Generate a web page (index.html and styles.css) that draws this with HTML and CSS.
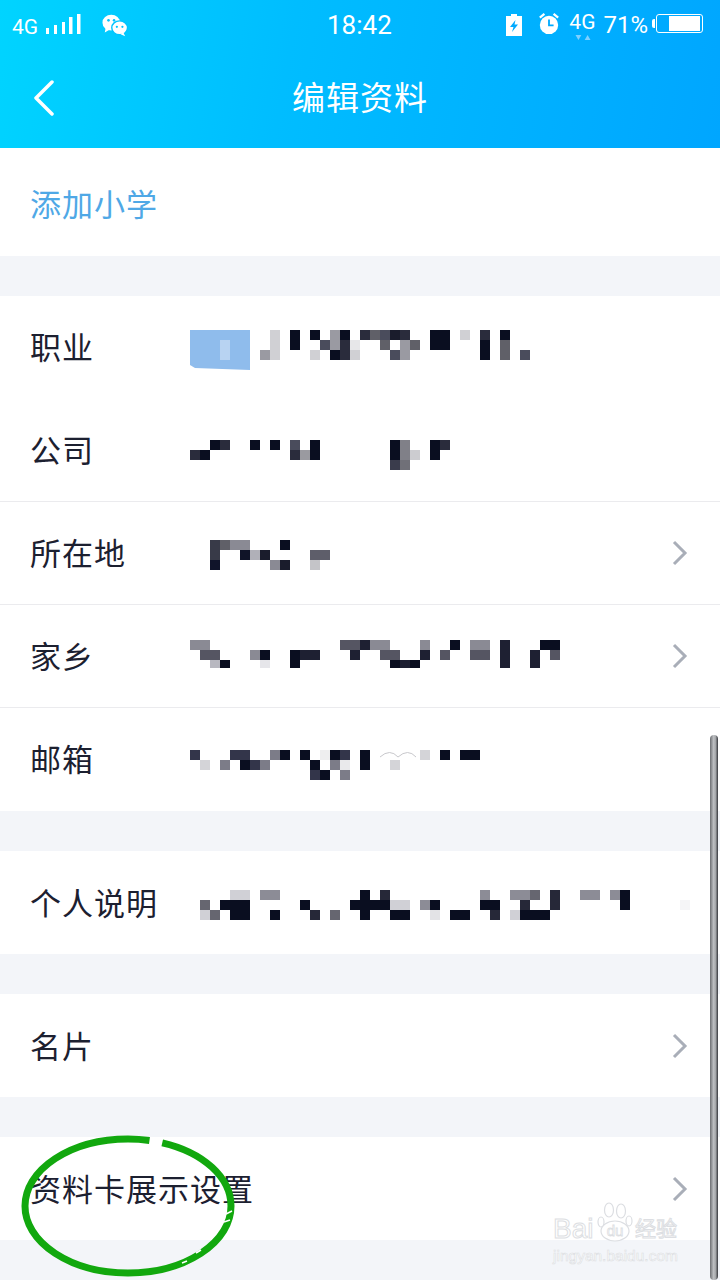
FILE: index.html
```html
<!DOCTYPE html>
<html lang="zh">
<head>
  <meta charset="UTF-8">
  <title>编辑资料</title>
  <link rel="stylesheet" href="styles.css">
</head>
<body>
  <div class="phone">
    <header class="top">
      <div class="status">
        <div class="status-left">
          <span class="net">4G</span>
          <svg class="signal" width="36" height="22" viewBox="0 0 36 22" fill="#fff">
            <rect x="1" y="14" width="3" height="6"/>
            <rect x="9" y="11" width="3" height="9"/>
            <rect x="17" y="8" width="3" height="12"/>
            <rect x="24" y="3" width="3.500" height="17"/>
            <rect x="32" y="0" width="3.500" height="20"/>
          </svg>
          <svg class="wechat" width="26" height="24" viewBox="0 0 28 24">
            <ellipse cx="10" cy="9.500" rx="9.500" ry="8.500" fill="#fff"/>
            <path d="M4 15l-1 5 5-3z" fill="#fff"/>
            <ellipse cx="19" cy="15" rx="8.500" ry="7.500" fill="#fff" stroke="#00c4ff" stroke-width="1.500"/>
            <path d="M23 20l2 4-5-2z" fill="#fff"/>
            <circle cx="7" cy="7" r="1.400" fill="#00c4ff"/>
            <circle cx="13" cy="7" r="1.400" fill="#00c4ff"/>
            <circle cx="16" cy="14" r="1.200" fill="#00c4ff"/>
            <circle cx="22" cy="14" r="1.200" fill="#00c4ff"/>
          </svg>
        </div>
        <span class="clock">18:42</span>
        <div class="status-right">
          <svg width="16" height="22" viewBox="0 0 16 22">
            <path d="M5 0h6v2h5v20H0V2h5z" fill="#fff"/>
            <path d="M9.500 6L4 13h3.500L6 18l6-7.500H8.500z" fill="#00aaff"/>
          </svg>
          <svg class="alarm" width="22" height="22" viewBox="0 0 22 24">
            <circle cx="11" cy="13" r="10" fill="#fff"/>
            <path d="M1 5l5-4M21 5l-5-4" stroke="#fff" stroke-width="2.500" fill="none"/>
            <path d="M11 7v6.500h5" stroke="#00aaff" stroke-width="2" fill="none"/>
          </svg>
          <span class="net-wrap">4G<svg class="arrows" width="16" height="5" viewBox="0 0 18 6" fill="#7fd0ff"><path d="M0 0h7L3.500 6z"/><path d="M11 6h7L14.500 0z"/></svg></span>
          <span class="percent">71%</span>
          <div class="battery"><div class="battery-level"></div></div>
        </div>
      </div>
      <nav class="nav">
        <svg class="back" width="22" height="36" viewBox="0 0 22 36">
          <path d="M19 2L3 18l16 16" fill="none" stroke="#fff" stroke-width="3.500" stroke-linecap="round" stroke-linejoin="round"/>
        </svg>
        <span class="title">编辑资料</span>
      </nav>
    </header>

    <div class="row row-add"><span class="add">添加小学</span></div>
    <div class="gap"></div>

    <div class="row">
      <span class="label">职业</span>
      <svg class="mosaic" width="529" height="103" viewBox="190 296 529 103">
        <path fill="#8fbcec" d="M190 330h60v40l-55-2-5-3z"/>
        <rect x="220" y="340" width="10" height="20" fill="#b8d3f2"/>
        <g fill="#0a0e20">
          <rect x="290" y="330" width="10" height="20"/><rect x="310" y="330" width="10" height="10"/><rect x="340" y="330" width="10" height="10"/>
          <rect x="430" y="330" width="20" height="20"/><rect x="500" y="330" width="10" height="10"/><rect x="480" y="340" width="10" height="20"/><rect x="330" y="350" width="10" height="10"/>
        </g>
        <g fill="#2a2c3c">
          <rect x="360" y="330" width="10" height="10"/><rect x="400" y="330" width="10" height="10"/><rect x="340" y="340" width="10" height="20"/><rect x="480" y="330" width="10" height="10"/>
        </g>
        <g fill="#4a4c5c">
          <rect x="380" y="330" width="10" height="10"/><rect x="320" y="340" width="10" height="10"/><rect x="390" y="350" width="10" height="10"/><rect x="520" y="350" width="10" height="10"/>
        </g>
        <g fill="#606068">
          <rect x="370" y="330" width="10" height="10"/><rect x="380" y="340" width="10" height="10"/><rect x="500" y="340" width="10" height="20"/><rect x="410" y="340" width="10" height="10"/>
        </g>
        <g fill="#9a9aa2">
          <rect x="330" y="330" width="10" height="20"/><rect x="400" y="340" width="10" height="20"/><rect x="260" y="350" width="10" height="10"/>
        </g>
        <g fill="#d0d0d4">
          <rect x="270" y="330" width="10" height="30"/><rect x="350" y="350" width="10" height="10"/><rect x="310" y="350" width="10" height="10"/><rect x="460" y="330" width="10" height="10"/><rect x="350" y="340" width="10" height="10" opacity="0.5"/>
        </g>
        <rect x="390" y="330" width="10" height="10" fill="#1a1c2c"/>
      </svg>
    </div>

    <div class="row row-line">
      <span class="label">公司</span>
      <svg class="mosaic" width="529" height="102" viewBox="190 399 529 102">
        <g fill="#0a0e20">
          <rect x="210" y="440" width="10" height="10"/><rect x="250" y="440" width="10" height="10"/><rect x="270" y="440" width="10" height="10"/><rect x="310" y="440" width="10" height="20"/>
          <rect x="390" y="440" width="10" height="20"/><rect x="430" y="440" width="10" height="20"/><rect x="200" y="450" width="10" height="10"/>
        </g>
        <g fill="#2a2c3c">
          <rect x="220" y="440" width="10" height="10"/><rect x="440" y="440" width="10" height="10"/><rect x="190" y="450" width="10" height="10"/><rect x="290" y="450" width="10" height="10"/>
        </g>
        <rect x="290" y="440" width="10" height="10" fill="#4a4c5c"/>
        <rect x="300" y="450" width="10" height="10" fill="#9a9aa0"/>
        <rect x="400" y="440" width="10" height="20" fill="#808088"/>
        <rect x="410" y="450" width="10" height="10" fill="#ccccd0"/>
        <rect x="390" y="460" width="10" height="10" fill="#3a3c4c"/>
        <rect x="400" y="460" width="10" height="10" fill="#707078"/>
      </svg>
    </div>

    <div class="row row-line">
      <span class="label">所在地</span>
      <svg class="mosaic" width="480" height="102" viewBox="190 502 480 102">
        <rect x="210" y="540" width="10" height="20" fill="#383a48"/>
        <rect x="220" y="540" width="10" height="10" fill="#606068"/>
        <rect x="230" y="540" width="20" height="10" fill="#8a8a94"/>
        <rect x="280" y="540" width="10" height="10" fill="#0a0e20"/>
        <rect x="240" y="550" width="10" height="10" fill="#101428"/>
        <rect x="250" y="550" width="10" height="10" fill="#b0b0b8"/>
        <rect x="260" y="550" width="10" height="10" fill="#1a1c2c"/>
        <rect x="310" y="550" width="20" height="10" fill="#5e5e6a"/>
        <rect x="210" y="560" width="10" height="10" fill="#10142a"/>
        <rect x="270" y="560" width="10" height="10" fill="#8a8a94"/>
        <rect x="280" y="560" width="10" height="10" fill="#1a1c2c"/>
        <rect x="310" y="560" width="10" height="10" fill="#c4c4c8"/>
      </svg>
      <svg class="chevron" width="16" height="26" viewBox="0 0 16 26"><path d="M2 2l11 11L2 24"/></svg>
    </div>

    <div class="row row-line">
      <span class="label">家乡</span>
      <svg class="mosaic" width="480" height="102" viewBox="190 605 480 102">
        <g fill="#0a0e20">
          <rect x="260" y="650" width="10" height="10"/><rect x="290" y="650" width="10" height="18"/><rect x="450" y="640" width="10" height="10"/><rect x="540" y="640" width="20" height="10"/>
          <rect x="220" y="660" width="10" height="8"/><rect x="390" y="660" width="10" height="8"/><rect x="410" y="660" width="10" height="8"/>
        </g>
        <g fill="#1e2032">
          <rect x="360" y="640" width="10" height="10"/><rect x="500" y="640" width="10" height="28"/><rect x="300" y="650" width="20" height="10"/><rect x="350" y="650" width="10" height="10"/>
          <rect x="420" y="650" width="10" height="10"/><rect x="530" y="650" width="10" height="18"/><rect x="400" y="660" width="10" height="8"/>
        </g>
        <g fill="#555562">
          <rect x="340" y="640" width="20" height="10"/><rect x="200" y="650" width="20" height="10"/><rect x="380" y="650" width="20" height="10"/><rect x="440" y="650" width="10" height="10"/>
          <rect x="470" y="650" width="20" height="10"/><rect x="550" y="650" width="10" height="10"/>
        </g>
        <g fill="#8a8a94">
          <rect x="190" y="640" width="20" height="10"/><rect x="370" y="640" width="20" height="10"/><rect x="420" y="640" width="10" height="10"/><rect x="470" y="640" width="20" height="10"/><rect x="250" y="650" width="10" height="10"/>
        </g>
        <rect x="210" y="660" width="10" height="8" fill="#b8b8c0"/>
        <rect x="260" y="660" width="10" height="8" fill="#e6e6ea"/>
      </svg>
      <svg class="chevron" width="16" height="26" viewBox="0 0 16 26"><path d="M2 2l11 11L2 24"/></svg>
    </div>

    <div class="row">
      <span class="label">邮箱</span>
      <svg class="mosaic" width="480" height="103" viewBox="190 708 480 103">
        <g fill="#0a0e20">
          <rect x="280" y="750" width="10" height="10"/><rect x="300" y="750" width="10" height="10"/><rect x="330" y="750" width="10" height="10"/><rect x="360" y="750" width="10" height="20"/>
          <rect x="440" y="750" width="10" height="10"/><rect x="460" y="750" width="20" height="10"/><rect x="240" y="760" width="10" height="10"/><rect x="310" y="760" width="10" height="10"/><rect x="320" y="770" width="10" height="10"/>
        </g>
        <g fill="#33354a">
          <rect x="190" y="750" width="10" height="10"/><rect x="230" y="750" width="20" height="10"/><rect x="340" y="750" width="10" height="10"/><rect x="250" y="760" width="10" height="10"/><rect x="310" y="770" width="10" height="10"/>
        </g>
        <g fill="#7c7c88">
          <rect x="270" y="750" width="10" height="10"/><rect x="220" y="760" width="10" height="10"/><rect x="260" y="760" width="10" height="10"/><rect x="330" y="760" width="10" height="10"/><rect x="340" y="770" width="10" height="10"/>
        </g>
        <g fill="#d4d4d8">
          <rect x="420" y="750" width="10" height="10"/><rect x="200" y="760" width="10" height="10"/><rect x="390" y="760" width="10" height="10"/><rect x="340" y="760" width="10" height="10" opacity="0.5"/><rect x="320" y="750" width="10" height="10" opacity="0.4"/>
        </g>
        <path d="M380 757q10-9 18 0q10-9 18 0" fill="none" stroke="#c8c8cc" stroke-width="1"/>
      </svg>
    </div>

    <div class="gap"></div>

    <div class="row">
      <span class="label label-low">个人说明</span>
      <svg class="mosaic" width="500" height="103" viewBox="190 851 500 103">
        <g fill="#0a0e20">
          <rect x="360" y="890" width="10" height="30"/><rect x="620" y="890" width="10" height="20"/><rect x="220" y="900" width="30" height="10"/><rect x="300" y="900" width="10" height="10"/>
          <rect x="350" y="900" width="40" height="10"/><rect x="430" y="900" width="10" height="10"/><rect x="480" y="900" width="20" height="10"/>
          <rect x="230" y="910" width="20" height="10"/><rect x="270" y="910" width="10" height="10"/><rect x="390" y="910" width="20" height="10"/><rect x="450" y="910" width="20" height="10"/><rect x="520" y="910" width="30" height="10"/>
        </g>
        <g fill="#262838">
          <rect x="380" y="890" width="10" height="10"/><rect x="550" y="890" width="10" height="20"/><rect x="520" y="900" width="10" height="10"/><rect x="310" y="910" width="10" height="10"/><rect x="490" y="910" width="10" height="10"/>
        </g>
        <g fill="#666670">
          <rect x="530" y="890" width="10" height="10"/><rect x="200" y="900" width="10" height="10"/><rect x="210" y="910" width="10" height="10"/><rect x="330" y="910" width="10" height="10"/>
        </g>
        <g fill="#8c8c96">
          <rect x="480" y="890" width="10" height="10"/><rect x="510" y="890" width="20" height="10"/><rect x="260" y="890" width="20" height="10"/><rect x="580" y="890" width="20" height="10"/><rect x="610" y="890" width="10" height="10"/><rect x="420" y="900" width="10" height="10"/>
        </g>
        <g fill="#d0d0d6">
          <rect x="230" y="890" width="20" height="10"/><rect x="390" y="900" width="20" height="10"/><rect x="200" y="910" width="10" height="10"/><rect x="510" y="910" width="10" height="10"/><rect x="430" y="910" width="10" height="10" opacity="0.6"/>
        </g>
        <rect x="680" y="900" width="10" height="10" fill="#f5f5f7"/>
      </svg>
    </div>

    <div class="gap"></div>

    <div class="row">
      <span class="label label-low label-wide">名片</span>
      <svg class="chevron" width="16" height="26" viewBox="0 0 16 26"><path d="M2 2l11 11L2 24"/></svg>
    </div>

    <div class="gap"></div>

    <div class="row">
      <span class="label label-low label-wide">资料卡展示设置</span>
      <svg class="chevron" width="16" height="26" viewBox="0 0 16 26"><path d="M2 2l11 11L2 24"/></svg>
    </div>

    <div class="gap"></div>

    <!-- marks drawn on top of the screenshot -->
    <div class="scrollbar"></div>
    <svg class="circle" width="240" height="150" viewBox="0 0 240 150">
      <ellipse cx="128" cy="76" rx="103" ry="67" fill="none" stroke="#12a80e" stroke-width="7" pathLength="1000" stroke-dasharray="790 24 186 0"/>
      <path d="M226 84l6-3M224 92l6-2M196 123l5-3M182 133l5-2" stroke="#fff" stroke-width="1.500" fill="none"/>
    </svg>
    <div class="watermark">
      <div class="wm-top">
        <span class="wm-bai">Bai</span>
        <svg class="paw" width="36" height="40" viewBox="0 0 36 40" fill="#fff" stroke="#dcdee2" stroke-width="1.200">
          <ellipse cx="18" cy="29" rx="14" ry="10"/>
          <ellipse cx="4" cy="20" rx="3" ry="5"/>
          <ellipse cx="12" cy="8" rx="4.500" ry="7"/>
          <ellipse cx="24" cy="9" rx="4.500" ry="7"/>
          <ellipse cx="32" cy="19" rx="3" ry="5"/>
          <text x="18" y="34" text-anchor="middle" font-size="15" font-family="Liberation Sans" stroke-width="0.800">du</text>
        </svg>
        <span class="wm-cn">经验</span>
      </div>
      <div class="wm-url">jingyan.baidu.com</div>
    </div>
  </div>
</body>
</html>
```

FILE: styles.css
```css
html, body {
  margin: 0;
  padding: 0;
}

body {
  font-family: "Noto Sans CJK SC", "Liberation Sans", sans-serif;
  background-color: #f3f5f9;
}

.phone {
  position: relative;
  width: 720px;
  height: 1280px;
  overflow: hidden;
}

.top {
  height: 148px;
  background: linear-gradient(100deg, #00d4ff 0%, #00bdff 40%, #00a6ff 100%);
  color: white;
}

.status {
  height: 50px;
  display: flex;
  align-items: center;
  justify-content: space-between;
  padding: 0 17px 0 12px;
  position: relative;
  font-family: Roboto, "Liberation Sans", sans-serif;
}

.status-left,
.status-right {
  display: flex;
  align-items: center;
}

.net {
  width: 33px;
  font-size: 21px;
  position: relative;
  top: 2px;
}

.signal {
  margin-right: 21px;
}

.wechat {
  margin-top: -1px;
}

.clock {
  position: absolute;
  left: 327px;
  top: 10px;
  font-size: 26px;
  line-height: 30px;
}

.alarm {
  margin-left: 16px;
  margin-top: -2px;
}

.net-wrap {
  position: relative;
  margin-left: 9px;
  font-size: 21px;
  line-height: 26px;
  top: -3px;
}

.arrows {
  position: absolute;
  left: 6px;
  top: 26px;
}

.percent {
  margin-left: 8px;
  font-size: 24px;
}

.battery {
  position: relative;
  margin-left: 8px;
  width: 43px;
  height: 17px;
  border: 1px solid white;
  border-radius: 3px;
  display: flex;
  justify-content: flex-end;
  align-items: center;
  padding-right: 2px;
  margin-top: -3px;
}

.battery::before {
  content: "";
  position: absolute;
  left: -5px;
  top: 4px;
  width: 3px;
  height: 9px;
  background: white;
  border-radius: 2px 0 0 2px;
}

.battery-level {
  width: 31px;
  height: 15px;
  background: white;
}

.nav {
  height: 98px;
  display: flex;
  align-items: center;
  justify-content: center;
  position: relative;
}

.back {
  position: absolute;
  left: 33px;
  top: 30px;
}

.title {
  font-size: 33px;
  letter-spacing: 1px;
  margin-top: -6px;
}

.row {
  box-sizing: border-box;
  height: 103px;
  background: white;
  display: flex;
  align-items: center;
  padding-left: 30px;
  padding-right: 32px;
  color: #1c2030;
}

.row-add {
  height: 108px;
}

.row-line {
  border-bottom: 1px solid #ebebee;
}

.add {
  font-size: 31px;
  letter-spacing: 1px;
  color: #4fa8e6;
}

.label {
  width: 160px;
  flex-shrink: 0;
  font-size: 31px;
  letter-spacing: 1px;
  margin-bottom: 4px;
}

.label-low {
  margin-bottom: 2px;
}

.label-wide {
  width: auto;
  flex-grow: 1;
}

.mosaic {
  display: block;
  flex-shrink: 0;
  margin-right: -100px;
}

.chevron {
  margin-left: auto;
  flex-shrink: 0;
  position: relative;
  z-index: 1;
}

.chevron path {
  fill: none;
  stroke: #a9aeb8;
  stroke-width: 3;
}

.gap {
  height: 40px;
}

.scrollbar {
  position: absolute;
  left: 710px;
  top: 735px;
  width: 8px;
  height: 545px;
  background: linear-gradient(90deg, #6c6e72, #bdbfc2 45%, #a4a6a9 70%, #33353a);
  border-radius: 4px;
}

.circle {
  position: absolute;
  left: 0;
  top: 1130px;
}

.watermark {
  position: absolute;
  left: 553px;
  top: 1202px;
  width: 130px;
  color: white;
  font-family: "Liberation Sans", "Noto Sans CJK SC", sans-serif;
  -webkit-text-stroke: 1px #dcdee2;
}

.wm-top {
  display: flex;
  align-items: flex-end;
  height: 40px;
}

.wm-bai {
  width: 44px;
  font-size: 28px;
  line-height: 26px;
}

.paw {
  flex-shrink: 0;
}

.wm-cn {
  margin-left: 2px;
  font-size: 21px;
  line-height: 26px;
  white-space: nowrap;
}

.wm-url {
  margin-top: 4px;
  font-size: 15.500px;
  line-height: 20px;
  white-space: nowrap;
  -webkit-text-stroke: 0.6px #dcdee2;
}
```
